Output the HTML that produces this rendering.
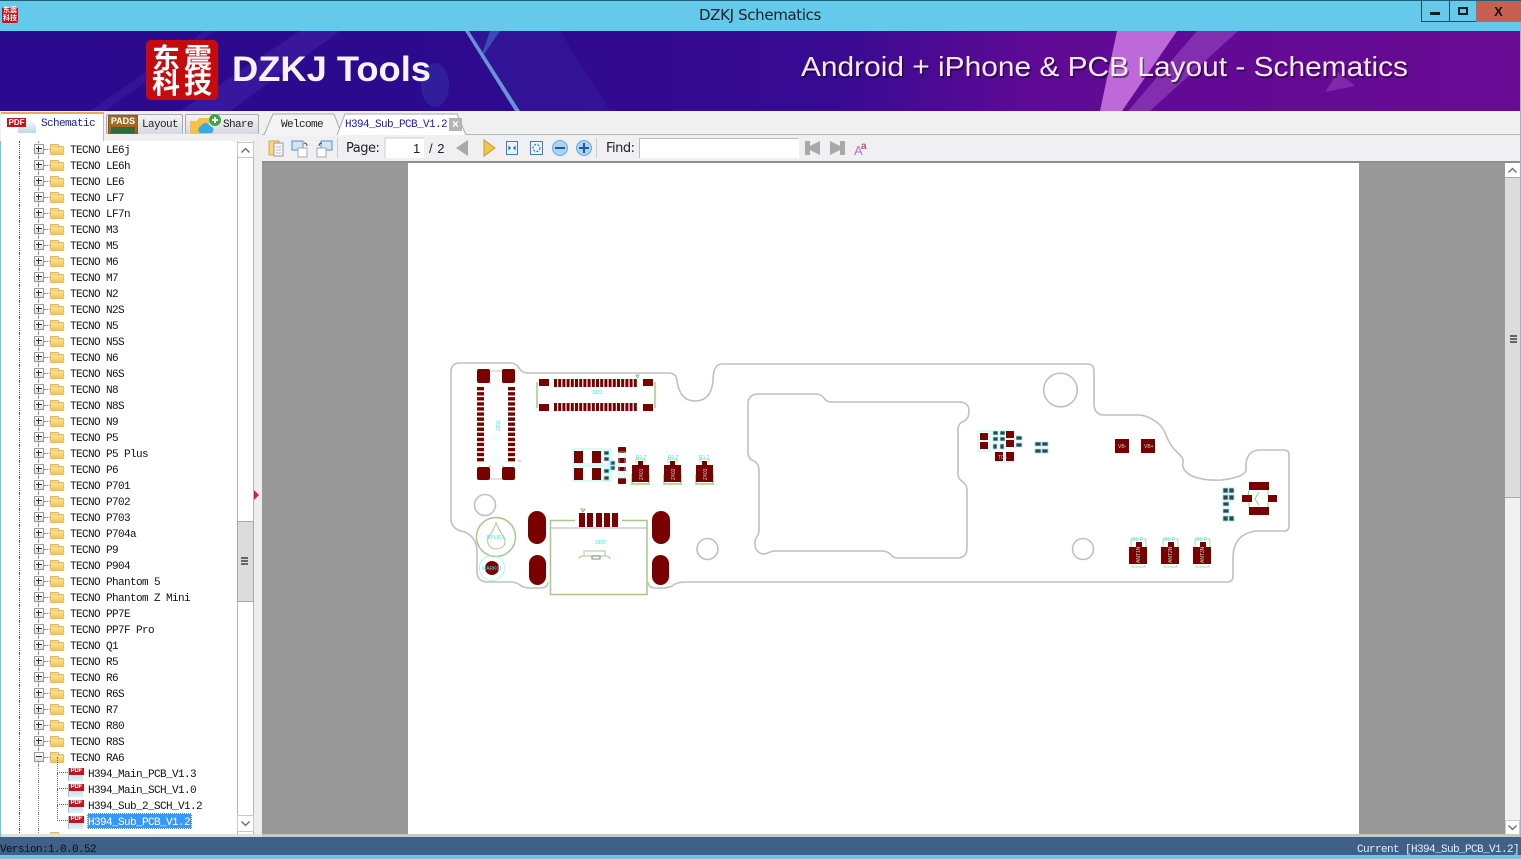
<!DOCTYPE html>
<html><head><meta charset="utf-8"><title>DZKJ Schematics</title>
<style>
html,body{margin:0;padding:0;width:1521px;height:859px;overflow:hidden;background:#f0f0f0}
*{box-sizing:border-box}
.a{position:absolute}
#tree{left:1px;top:141px;width:236px;height:693px;background:#fff;overflow:hidden;font:11px/20px "Liberation Mono",monospace;letter-spacing:-.6px;color:#111;padding-top:0}
.r{position:relative;height:16px;padding-left:69px;white-space:pre}
.r::before{content:"";position:absolute;left:18px;top:0;height:16px;border-left:1px dotted #555}
.r::after{content:"";position:absolute;left:37px;top:0;height:16px;border-left:1px dotted #888}
.r i{position:absolute;left:33px;top:3px;width:10px;height:10px;border:1px solid #999;background:linear-gradient(#fff,#ddd);z-index:2}
.r i::before{content:"";position:absolute;left:1px;top:3px;width:6px;height:2px;border-top:1px solid #333}
.r i.p::after{content:"";position:absolute;left:3px;top:1px;height:6px;border-left:1px solid #333}
.r u{position:absolute;left:43px;top:8px;width:6px;border-top:1px dotted #888}
.r b{position:absolute;left:49px;top:5px;width:14px;height:9px;background:linear-gradient(#fde59a,#f7c452);border:1px solid #e2bc62;border-radius:1px}
.r b::before{content:"";position:absolute;left:-1px;top:-3px;width:7px;height:3px;background:#f9d67c;border:1px solid #e2bc62;border-bottom:0;border-radius:1px 1px 0 0}
.d{padding-left:87px}
.d u{left:56px;top:-8px;width:11px;height:16px;border-top:0;border-left:1px dotted #666;border-bottom:1px dotted #666}
.d::after{height:16px}
.d s{position:absolute;left:67px;top:3px;width:15px;height:13px;background:linear-gradient(#fff 0,#fff 45%,#bfe0f0 45%,#dff0f8 100%);border-left:1px solid #9cc}
.d s::before{content:"PDF";position:absolute;left:0;top:0;width:15px;height:7px;background:#c0151c;color:#fff;font:bold 6px/7px "Liberation Sans",sans-serif;letter-spacing:0;text-align:center}
.sel span{display:inline-block;vertical-align:top;background:#3399ff;color:#fff;height:16px;line-height:20px;overflow:hidden;margin-left:-1px;padding:0 2px 0 1px;outline:1px dotted #ffe;outline-offset:-1px}
.m{font:11px/16px "Liberation Mono",monospace;letter-spacing:-.6px;white-space:pre}
</style></head>
<body>
<!-- title bar -->
<div class="a" style="left:0;top:0;width:1521px;height:31px;background:#65c9eb;border-top:1px solid #1e5f78"></div>
<div class="a" style="left:2px;top:7px;width:16px;height:16px;background:#c8141c;border-radius:2px;color:#fff;font:bold 7px/7.5px 'Noto Sans CJK SC',sans-serif;text-align:center;padding-top:0">东震<br>科技</div>
<div class="a" style="left:560px;width:400px;top:6px;text-align:center;font:15px/19px 'DejaVu Sans','Liberation Sans',sans-serif;color:#222;letter-spacing:-.35px">DZKJ Schematics</div>
<div class="a" style="left:1421px;top:1px;width:28px;height:21px;border:1px solid #1e4a5e;border-top:0;border-right:0"></div>
<div class="a" style="left:1430px;top:12px;width:10px;height:3px;background:#0a1c28"></div>
<div class="a" style="left:1449px;top:1px;width:27px;height:21px;border-left:1px solid #1e4a5e;border-bottom:1px solid #1e4a5e"></div>
<div class="a" style="left:1458px;top:7px;width:10px;height:8px;border:2px solid #0a1c28"></div>
<div class="a" style="left:1476px;top:1px;width:45px;height:21px;background:#c75f52"></div>
<div class="a" style="left:1476px;top:1px;width:45px;height:21px;text-align:center;font:bold 13px/21px 'Liberation Sans',sans-serif;color:#111">X</div>

<!-- banner -->
<svg class="a" style="left:0;top:31px" width="1521" height="80" viewBox="0 31 1521 80">
<defs><linearGradient id="bg" x1="0" x2="1" y1="0" y2="0"><stop offset="0" stop-color="#2a0a8e"/><stop offset=".33" stop-color="#2d0a8e"/><stop offset=".55" stop-color="#380a92"/><stop offset=".68" stop-color="#5f0a96"/><stop offset="1" stop-color="#680a94"/></linearGradient></defs>
<rect x="0" y="31" width="1521" height="80" fill="url(#bg)"/>
<polygon points="180,111 300,31 340,31 230,111" fill="#3d1ca4" opacity=".7"/>
<polygon points="90,111 205,31 215,31 105,111" fill="#3a1aa0" opacity=".6"/>
<polygon points="465,31 469,31 520,111 515,111" fill="#7fc0ee" opacity=".75"/>
<polygon points="469,31 560,31 610,111 520,111" fill="#3a2aa8" opacity=".3"/>
<polygon points="490,31 500,31 480,60" fill="#4aa0e0" opacity=".4"/>
<ellipse cx="435" cy="85" rx="14" ry="22" fill="#3a6acc" opacity=".22"/>
<polygon points="1117,31 1177,31 1122,111 1100,111" fill="#cf7ae6" opacity=".85"/>
<polygon points="1197,31 1238,31 1150,111 1128,111" fill="#9a46c0" opacity=".6"/>
<polygon points="1325,92 1355,86 1338,72" fill="#8a34b0" opacity=".7"/>
<text x="801" y="76" font-family="Liberation Sans,sans-serif" font-size="28" fill="#000" opacity=".45" textLength="607" lengthAdjust="spacingAndGlyphs" transform="translate(1.5,2)">Android + iPhone &amp; PCB Layout - Schematics</text>
<text x="801" y="76" font-family="Liberation Sans,sans-serif" font-size="28" fill="#f4eaf8" textLength="607" lengthAdjust="spacingAndGlyphs">Android + iPhone &amp; PCB Layout - Schematics</text>
<rect x="146" y="40" width="72" height="60" rx="5" fill="#c60b0f"/>
<text x="182" y="68" text-anchor="middle" font-family="Noto Sans CJK SC,sans-serif" font-weight="700" font-size="28" fill="#fff" textLength="60">东震</text>
<text x="182" y="93" text-anchor="middle" font-family="Noto Sans CJK SC,sans-serif" font-weight="700" font-size="28" fill="#fff" textLength="60">科技</text>
<text x="232" y="81" font-family="Liberation Sans,sans-serif" font-weight="700" font-size="35" fill="#f6f2fb" textLength="199" lengthAdjust="spacingAndGlyphs">DZKJ Tools</text>
</svg>

<!-- tab strip + toolbar -->
<div class="a" style="left:0;top:111px;width:1521px;height:24px;background:#f0f0f0"></div>
<div class="a" style="left:262px;top:134px;width:1259px;height:1px;background:#b8b8b8"></div>
<div class="a" style="left:262px;top:135px;width:1259px;height:26px;background:#f0f0f2"></div>
<div class="a" style="left:262px;top:161px;width:1259px;height:2px;background:#8e8e8e"></div>
<!-- left tabs -->
<div class="a" style="left:1px;top:112px;width:103px;height:30px;background:#fff;border-top:2px solid #f0a84a;border-right:1px solid #bbb"></div>
<div class="a" style="left:106px;top:114px;width:77px;height:20px;background:linear-gradient(#f4f4f8,#d6d8e2);border:1px solid #aaa;border-bottom:0;border-radius:2px 2px 0 0"></div>
<div class="a" style="left:185px;top:114px;width:74px;height:20px;background:linear-gradient(#f4f4f8,#d6d8e2);border:1px solid #aaa;border-bottom:0;border-radius:2px 2px 0 0"></div>
<div class="a" style="left:18px;top:118px;width:18px;height:15px;background:linear-gradient(#fff,#bcd8ec);clip-path:polygon(0 0,60% 0,100% 50%,100% 100%,0 100%)"></div>
<div class="a" style="left:7px;top:118px;width:19px;height:9px;background:#c4141c;color:#fff;font:bold 8px/9px 'Liberation Sans',sans-serif;text-align:center">PDF</div>
<div class="a m" style="left:41px;top:115px;color:#1a1aa8;line-height:18px">Schematic</div>
<div class="a" style="left:108px;top:115px;width:30px;height:19px;background:#a26a1e;border:1px solid #8a5a18;color:#fff;font:bold 9px/11px 'Liberation Sans',sans-serif;text-align:center;overflow:hidden">PADS<div style="height:8px;background:#2e6a3a;margin:0 2px"></div></div>
<div class="a m" style="left:142px;top:117px;color:#222">Layout</div>
<svg class="a" style="left:188px;top:113px" width="36" height="21"><path d="M2 8h7l2-3h10v16H2z" fill="#f5c14a"/><path d="M12 20a4 4 0 0 1 1-7 5 5 0 0 1 9 0 4 4 0 0 1 2 7z" fill="#3aa7e6"/><circle cx="27" cy="7" r="6" fill="#3fa544"/><path d="M24 7h6M27 4v6" stroke="#fff" stroke-width="2"/></svg>
<div class="a m" style="left:223px;top:117px;color:#222">Share</div>
<!-- doc tabs -->
<svg class="a" style="left:262px;top:112px" width="212" height="24"><path d="M2 23L11 2H72L80 23" fill="#f4f4f4" stroke="#aaa"/><path d="M75 23L83 2H195L204 23" fill="#fff" stroke="#aaa"/></svg>
<div class="a m" style="left:281px;top:117px;color:#222">Welcome</div>
<div class="a m" style="left:345px;top:117px;color:#1a1aa8">H394_Sub_PCB_V1.2</div>
<div class="a" style="left:449px;top:118px;width:13px;height:13px;background:#b4b4b4;color:#fff;font:bold 12px/13px 'Liberation Sans',sans-serif;text-align:center">×</div>

<!-- toolbar icons -->
<svg class="a" style="left:262px;top:135px" width="620" height="26" viewBox="262 135 620 26">
<rect x="269" y="141" width="10" height="14" fill="#f5d68a" stroke="#d9a94a"/><rect x="274" y="143" width="9" height="13" fill="#f8f8f8" stroke="#999"/><path d="M276 147h5M276 150h5M276 153h5" stroke="#bbb"/>
<rect x="292" y="141" width="11" height="9" fill="#cfe6f6" stroke="#5a8fb8"/><rect x="298" y="148" width="9" height="9" fill="#fff" stroke="#aaa"/><path d="M304 143q3 0 3 3" stroke="#444" fill="none"/>
<rect x="321" y="141" width="11" height="9" fill="#cfe6f6" stroke="#5a8fb8"/><rect x="317" y="148" width="9" height="9" fill="#fff" stroke="#aaa"/><path d="M319 146q0-3 3-3" stroke="#444" fill="none"/>
<path d="M337.500 138v20" stroke="#ccc"/>
<rect x="385" y="138" width="39" height="20" fill="#fff"/><path d="M385 158v-20h39" stroke="#ccc" fill="none"/>
<polygon points="456,148 468,140 468,156" fill="#a8a8a8"/>
<polygon points="495,148 484,140 484,156" fill="#f3c548" stroke="#c79a2a"/>
<rect x="506.500" y="141.500" width="11" height="13" fill="#e8f2fa" stroke="#3e80b8"/><path d="M511 148l-2.500-2.500v5zM513 148l2.500-2.500v5z" fill="#24608f"/>
<rect x="530.500" y="141.500" width="12" height="13" fill="#e8f2fa" stroke="#3e80b8"/><circle cx="536.500" cy="148" r="3.500" fill="none" stroke="#24608f" stroke-dasharray="2 1.500"/>
<circle cx="560" cy="148" r="7.500" fill="#a8d4f2" stroke="#6aa8d8"/><rect x="555" y="147" width="10" height="2" fill="#1c5a96"/>
<circle cx="584" cy="148" r="7.500" fill="#a8d4f2" stroke="#6aa8d8"/><path d="M579 148h10M584 143v10" stroke="#1c5a96" stroke-width="2"/>
<path d="M596.500 138v20" stroke="#ccc"/>
<rect x="639" y="138" width="160" height="20" fill="#fff"/><path d="M639.500 158v-19.500h159" stroke="#bbb" fill="none"/>
<path d="M805 141h5v5l10-5v14l-10-5v5h-5z" fill="#a8a8a8"/>
<path d="M845 141h-5v5l-10-5v14l10-5v5h5z" fill="#a8a8a8"/>
<text x="854" y="155" font-family="Liberation Sans,sans-serif" font-size="13" fill="#b070e0">A</text><text x="861" y="149" font-family="Liberation Sans,sans-serif" font-size="10" font-weight="700" fill="#c04a90">a</text>
</svg>
<div class="a" style="left:346px;top:140px;font:13px/17px 'DejaVu Sans','Liberation Sans',sans-serif;color:#222;letter-spacing:-.5px">Page:</div>
<div class="a" style="left:413px;top:140px;font:13px/17px 'Liberation Sans',sans-serif;color:#222">1</div>
<div class="a" style="left:429px;top:140px;font:13px/17px 'Liberation Sans',sans-serif;color:#222;word-spacing:1px">/ 2</div>
<div class="a" style="left:606px;top:140px;font:13px/17px 'DejaVu Sans','Liberation Sans',sans-serif;color:#222;letter-spacing:-.5px">Find:</div>

<!-- tree -->
<div class="a" style="left:0;top:141px;width:1px;height:696px;background:#65c9eb"></div>
<div class="a" id="tree">
<div class="r"><i class="p"></i><u></u><b></b>TECNO LE6j</div>
<div class="r"><i class="p"></i><u></u><b></b>TECNO LE6h</div>
<div class="r"><i class="p"></i><u></u><b></b>TECNO LE6</div>
<div class="r"><i class="p"></i><u></u><b></b>TECNO LF7</div>
<div class="r"><i class="p"></i><u></u><b></b>TECNO LF7n</div>
<div class="r"><i class="p"></i><u></u><b></b>TECNO M3</div>
<div class="r"><i class="p"></i><u></u><b></b>TECNO M5</div>
<div class="r"><i class="p"></i><u></u><b></b>TECNO M6</div>
<div class="r"><i class="p"></i><u></u><b></b>TECNO M7</div>
<div class="r"><i class="p"></i><u></u><b></b>TECNO N2</div>
<div class="r"><i class="p"></i><u></u><b></b>TECNO N2S</div>
<div class="r"><i class="p"></i><u></u><b></b>TECNO N5</div>
<div class="r"><i class="p"></i><u></u><b></b>TECNO N5S</div>
<div class="r"><i class="p"></i><u></u><b></b>TECNO N6</div>
<div class="r"><i class="p"></i><u></u><b></b>TECNO N6S</div>
<div class="r"><i class="p"></i><u></u><b></b>TECNO N8</div>
<div class="r"><i class="p"></i><u></u><b></b>TECNO N8S</div>
<div class="r"><i class="p"></i><u></u><b></b>TECNO N9</div>
<div class="r"><i class="p"></i><u></u><b></b>TECNO P5</div>
<div class="r"><i class="p"></i><u></u><b></b>TECNO P5 Plus</div>
<div class="r"><i class="p"></i><u></u><b></b>TECNO P6</div>
<div class="r"><i class="p"></i><u></u><b></b>TECNO P701</div>
<div class="r"><i class="p"></i><u></u><b></b>TECNO P702</div>
<div class="r"><i class="p"></i><u></u><b></b>TECNO P703</div>
<div class="r"><i class="p"></i><u></u><b></b>TECNO P704a</div>
<div class="r"><i class="p"></i><u></u><b></b>TECNO P9</div>
<div class="r"><i class="p"></i><u></u><b></b>TECNO P904</div>
<div class="r"><i class="p"></i><u></u><b></b>TECNO Phantom 5</div>
<div class="r"><i class="p"></i><u></u><b></b>TECNO Phantom Z Mini</div>
<div class="r"><i class="p"></i><u></u><b></b>TECNO PP7E</div>
<div class="r"><i class="p"></i><u></u><b></b>TECNO PP7F Pro</div>
<div class="r"><i class="p"></i><u></u><b></b>TECNO Q1</div>
<div class="r"><i class="p"></i><u></u><b></b>TECNO R5</div>
<div class="r"><i class="p"></i><u></u><b></b>TECNO R6</div>
<div class="r"><i class="p"></i><u></u><b></b>TECNO R6S</div>
<div class="r"><i class="p"></i><u></u><b></b>TECNO R7</div>
<div class="r"><i class="p"></i><u></u><b></b>TECNO R80</div>
<div class="r"><i class="p"></i><u></u><b></b>TECNO R8S</div>
<div class="r"><i></i><u></u><b></b>TECNO RA6</div>
<div class="r d"><u></u><s></s>H394_Main_PCB_V1.3</div>
<div class="r d"><u></u><s></s>H394_Main_SCH_V1.0</div>
<div class="r d"><u></u><s></s>H394_Sub_2_SCH_V1.2</div>
<div class="r d sel"><u></u><s></s><span>H394_Sub_PCB_V1.2</span></div>
<div class="r"><b></b></div>
</div>
<!-- tree scrollbar -->
<div class="a" style="left:237px;top:141px;width:17px;height:693px;background:#fff;border-left:1px solid #b4b4b4;border-right:1px solid #b4b4b4"></div>
<div class="a" style="left:237px;top:142px;width:17px;height:16px;background:#fff;border:1px solid #c8c8c8"></div>
<svg class="a" style="left:240px;top:146px" width="11" height="8"><path d="M1.500 6.500L5.500 2.500L9.500 6.500" fill="none" stroke="#666" stroke-width="1.300"/></svg>
<div class="a" style="left:237px;top:521px;width:17px;height:81px;background:#dcdcdc;border:1px solid #a8a8a8"></div>
<div class="a" style="left:241px;top:557px;width:7px;height:8px;border-top:2px solid #666;border-bottom:2px solid #666"></div>
<div class="a" style="left:241px;top:560px;width:7px;height:2px;background:#666"></div>
<div class="a" style="left:237px;top:815px;width:17px;height:17px;background:#fff;border:1px solid #c8c8c8"></div>
<svg class="a" style="left:240px;top:820px" width="11" height="8"><path d="M1.500 1.500L5.500 5.500L9.500 1.500" fill="none" stroke="#666" stroke-width="1.300"/></svg>
<!-- splitter -->
<div class="a" style="left:254px;top:135px;width:8px;height:702px;background:#eeeeee"></div>
<div class="a" style="left:254px;top:490px;width:0;height:0;border-left:5px solid #d8202a;border-top:5px solid transparent;border-bottom:5px solid transparent"></div>

<!-- viewer -->
<div class="a" style="left:262px;top:163px;width:1243px;height:671px;background:#999"></div>
<div class="a" style="left:408px;top:163px;width:951px;height:671px;background:#fff"></div>
<div class="a" style="left:1505px;top:163px;width:15px;height:671px;background:#dcdcdc;border-left:1px solid #aaa"></div>
<div class="a" style="left:1505px;top:163px;width:15px;height:15px;background:#fff;border-bottom:1px solid #aaa"></div>
<svg class="a" style="left:1507px;top:166px" width="11" height="8"><path d="M1.500 6.500L5.500 2.500L9.500 6.500" fill="none" stroke="#666" stroke-width="1.300"/></svg>
<div class="a" style="left:1505px;top:178px;width:15px;height:320px;background:#dcdcdc;border-bottom:1px solid #aaa"></div>
<div class="a" style="left:1510px;top:335px;width:7px;height:8px;border-top:2px solid #666;border-bottom:2px solid #666"></div>
<div class="a" style="left:1510px;top:338px;width:7px;height:2px;background:#666"></div>
<div class="a" style="left:1505px;top:498px;width:15px;height:336px;background:#f0f0f0"></div>
<div class="a" style="left:1505px;top:820px;width:15px;height:15px;background:#fff;border:1px solid #ccc"></div>
<svg class="a" style="left:1507px;top:824px" width="11" height="8"><path d="M1.500 1.500L5.500 5.500L9.500 1.500" fill="none" stroke="#666" stroke-width="1.300"/></svg>

<!-- PCB -->
<svg class="a" style="left:408px;top:163px" width="951" height="671" viewBox="408 163 951 671">
<g fill="none" stroke="#c0c0c0" stroke-width="1.600">
<path d="M451 372Q451 363 460 363H510Q516 363 519 368Q522 373 528 373H668Q677 373 677 381Q680 401 695 401Q711 401 713 381Q713 364 722 364H1087Q1094 364 1094 371V403Q1094 415 1104 415H1140Q1148 416 1155 421Q1163 426 1166 435Q1170 446 1177 452Q1184 458 1183 462Q1181 470 1192 476Q1204 481 1222 480Q1245 477 1246 470V463Q1248 450 1260 450H1284Q1289 450 1289 455V526Q1289 531 1284 531H1256Q1234 534 1233 556V576Q1233 582 1227 582H685Q677 582 672 586Q668 588 662 588H654Q648 587 648 582"/>
<path d="M548 582Q548 588 540 588H530Q524 588 520 585Q516 582 510 582H488Q477 582 477 571V551Q477 538 465 532Q452 530 451 520V372"/>
<path d="M748 404Q748 394 759 394H816Q821 394 824 398Q826 402 832 402H959Q969 402 969 411Q969 420 962 422Q958 424 958 430V474Q958 479 963 482Q967 485 967 490V548Q967 558 957 558H898Q893 558 890 554Q887 551 881 551H776Q771 551 768 553Q760 556 756 549Q753 541 758 535Q759 533 759 528V470Q759 464 754 461Q748 459 748 452Z"/>
<circle cx="485" cy="505" r="10.500"/><circle cx="707.500" cy="549" r="10.500"/><circle cx="1060.500" cy="390" r="16.800"/><circle cx="1083" cy="549" r="10.500"/>
<path d="M550 528H647" stroke-width="1.200"/>
</g>
<g fill="none" stroke="#a8c888" stroke-width="1.500">
<path d="M575 520.500H550.500V594.500H647V520.500H622"/>
<path d="M537 382V408M655 382V408"/>
<circle cx="496" cy="537" r="19.500"/>
<path d="M496 523Q500 532 504 537Q508 548 496 549Q486 548 488 537Q493 532 496 523Z" stroke-width="1"/>
<path d="M579 559Q579 556 584 556V551H605V556Q610 556 610 559M584 556H605" stroke-width="1"/>
<path d="M491 371H502M491 479H502M490 382V384M503 382V384M490 465V467M503 465V467" stroke="#c8a878" stroke-width=".8"/>
<path d="M632 474V484H649V474M664 474V484H681V474M696 474V484H713V474" />
<path d="M636 463V459H645V463M668 463V459H677V463M700 463V459H709V463" stroke-width=".8"/>
<path d="M1131 548V539H1146V548M1163 548V539H1178V548M1195 548V539H1210V548M1132 565V567H1145V565M1164 565V567H1177V565M1196 565V567H1209V565" stroke-width=".8"/>
<path d="M1249 490Q1248 495 1248 502M1268 490V495M1268 502V507M1249 507V502M1259 492L1255 499L1259 505" stroke-width="1"/>
</g>
<path d="M592 556h8v3h-8z" fill="none" stroke="#666" stroke-width=".8"/>
<path d="M636 375h3l-1.500 3zM581 509h4l-2 3zM518 461h3" fill="none" stroke="#8aa860" stroke-width=".8"/>
<g fill="#7a0000">
<rect x="477" y="369" width="13" height="14" rx="2"/><rect x="502" y="369" width="13" height="14" rx="2"/><rect x="477" y="467" width="13" height="13" rx="2"/><rect x="502" y="467" width="13" height="13" rx="2"/>
<rect x="539" y="379" width="10" height="7"/><rect x="643" y="379" width="10" height="7"/><rect x="539" y="404" width="10" height="7"/><rect x="643" y="404" width="10" height="7"/>
<rect x="574" y="451" width="9" height="12"/><rect x="592" y="451" width="9" height="12"/><rect x="574" y="468" width="9" height="12"/><rect x="592" y="468" width="9" height="12"/>
<rect x="618" y="447" width="8" height="6" rx="1"/><rect x="618" y="458" width="8" height="5"/><rect x="618" y="467" width="8" height="4"/><rect x="618" y="478" width="8" height="6" rx="1"/>
<rect x="632" y="465" width="17" height="17"/><rect x="638" y="461" width="5" height="5"/>
<rect x="664" y="465" width="17" height="17"/><rect x="670" y="461" width="5" height="5"/>
<rect x="696" y="465" width="17" height="17"/><rect x="702" y="461" width="5" height="5"/>
<rect x="579" y="513" width="6" height="14"/><rect x="587" y="513" width="6" height="14"/><rect x="596" y="513" width="6" height="14"/><rect x="604" y="513" width="6" height="14"/><rect x="612" y="513" width="6" height="14"/>
<rect x="528" y="511" width="18" height="33" rx="9"/><rect x="529" y="555" width="17" height="30" rx="8.500"/><rect x="652" y="511" width="18" height="33" rx="9"/><rect x="652" y="555" width="17" height="30" rx="8.500"/>
<circle cx="492" cy="568" r="7"/>
<rect x="980" y="433" width="8" height="7"/><rect x="980" y="442" width="8" height="7"/><rect x="1006" y="431" width="8" height="7"/><rect x="1006" y="440" width="8" height="7"/>
<rect x="995" y="452" width="8" height="9"/><rect x="1006" y="452" width="8" height="9"/>
<rect x="1115" y="439" width="14" height="14"/><rect x="1141" y="439" width="14" height="14"/>
<rect x="1249" y="482" width="20" height="8"/><rect x="1249" y="507" width="20" height="8"/><rect x="1242" y="495" width="10" height="7"/><rect x="1268" y="495" width="9" height="7"/>
<rect x="1129" y="547" width="18" height="17"/><rect x="1136" y="542" width="6" height="5"/>
<rect x="1161" y="547" width="18" height="17"/><rect x="1168" y="542" width="6" height="5"/>
<rect x="1193" y="547" width="18" height="17"/><rect x="1200" y="542" width="6" height="5"/>
</g>
<g fill="none" stroke="#7a0000">
<line x1="480.500" y1="387" x2="480.500" y2="463" stroke-width="7" stroke-dasharray="3.400 1.670"/>
<line x1="511.500" y1="387" x2="511.500" y2="463" stroke-width="7" stroke-dasharray="3.400 1.670"/>
<line x1="554" y1="383" x2="638" y2="383" stroke-width="8" stroke-dasharray="3 1.200"/>
<line x1="554" y1="407" x2="638" y2="407" stroke-width="8" stroke-dasharray="3 1.200"/>
</g>
<g fill="#4a3a48" stroke="#7df2ec" stroke-width=".8">
<rect x="604" y="451" width="5" height="4"/><rect x="604" y="457" width="5" height="4"/><rect x="610" y="461" width="5" height="4"/><rect x="610" y="466" width="5" height="4"/><rect x="604" y="469" width="5" height="4"/><rect x="604" y="476" width="5" height="4"/>
<rect x="993" y="431" width="5" height="4"/><rect x="1000" y="431" width="5" height="4"/><rect x="993" y="437" width="5" height="4"/><rect x="1000" y="437" width="5" height="4"/><rect x="993" y="444" width="4" height="5"/><rect x="1000" y="444" width="4" height="5"/>
<rect x="1016" y="436" width="6" height="4"/><rect x="1016" y="443" width="6" height="4"/>
<rect x="1035" y="442" width="6" height="4"/><rect x="1042" y="442" width="6" height="4"/><rect x="1035" y="449" width="6" height="4"/><rect x="1042" y="449" width="6" height="4"/>
<rect x="1223" y="488" width="5" height="5"/><rect x="1229" y="488" width="5" height="5"/><rect x="1223" y="495" width="5" height="5"/><rect x="1229" y="495" width="5" height="5"/><rect x="1223" y="502" width="6" height="4"/><rect x="1223" y="509" width="6" height="4"/><rect x="1223" y="516" width="5" height="5"/><rect x="1229" y="516" width="5" height="5"/>
</g>
<g fill="none" stroke="#8ff2ee" stroke-width=".7">
<rect x="573" y="449" width="38" height="15"/><rect x="573" y="466" width="38" height="15"/>
<circle cx="492" cy="568" r="12.500"/>
<rect x="978" y="431" width="12" height="20"/>
<path d="M995 462H1014"/>
<rect x="619" y="452" width="6" height="26"/>
</g>
<g font-family="Liberation Sans,sans-serif" fill="#38e8e0" font-size="5">
<text x="592" y="394">J901</text>
<text x="595" y="544">J903</text>
<text x="487" y="539">BPLID1</text>
<text x="482" y="570" fill="#30f0e0">MARK01</text>
<text x="636" y="459">R1.7</text><text x="668" y="459">R1.7</text><text x="699" y="459">R1.7</text>
<text x="1132" y="541">R1.0</text><text x="1164" y="541">R1.0</text><text x="1196" y="541">R1.0</text>
<text x="0" y="0" transform="translate(500,431) rotate(-90)">J202</text>
</g>
<g font-family="Liberation Sans,sans-serif" fill="#bfd8d8" font-size="5">
<text x="0" y="0" transform="translate(643,480) rotate(-90)">Z401</text>
<text x="0" y="0" transform="translate(675,480) rotate(-90)">Z402</text>
<text x="0" y="0" transform="translate(707,480) rotate(-90)">Z403</text>
<text x="0" y="0" transform="translate(1140,563) rotate(-90)">ANT1N</text>
<text x="0" y="0" transform="translate(1172,563) rotate(-90)">ANT2N</text>
<text x="0" y="0" transform="translate(1204,563) rotate(-90)">ANT3N</text>
<text x="1118" y="448">VB-</text><text x="1144" y="448">VB+</text><text x="998" y="459">T06</text>
</g>
</svg>

<!-- bottom -->
<div class="a" style="left:1px;top:834px;width:261px;height:3px;background:#dfdfdf"></div>
<div class="a" style="left:262px;top:834px;width:1259px;height:3px;background:#c8c8c8"></div>
<div class="a" style="left:0;top:837px;width:1521px;height:18px;background:#3f6088"></div>
<div class="a" style="left:0;top:855px;width:1521px;height:4px;background:#65c9eb"></div>
<div class="a m" style="left:0;top:842px;color:#0c0f18">Version:1.0.0.52</div>
<div class="a m" style="right:2px;top:842px;color:#e8eef6">Current [H394_Sub_PCB_V1.2]</div>
<div class="a" style="left:1520px;top:31px;width:1px;height:806px;background:#65c9eb"></div>
</body></html>
